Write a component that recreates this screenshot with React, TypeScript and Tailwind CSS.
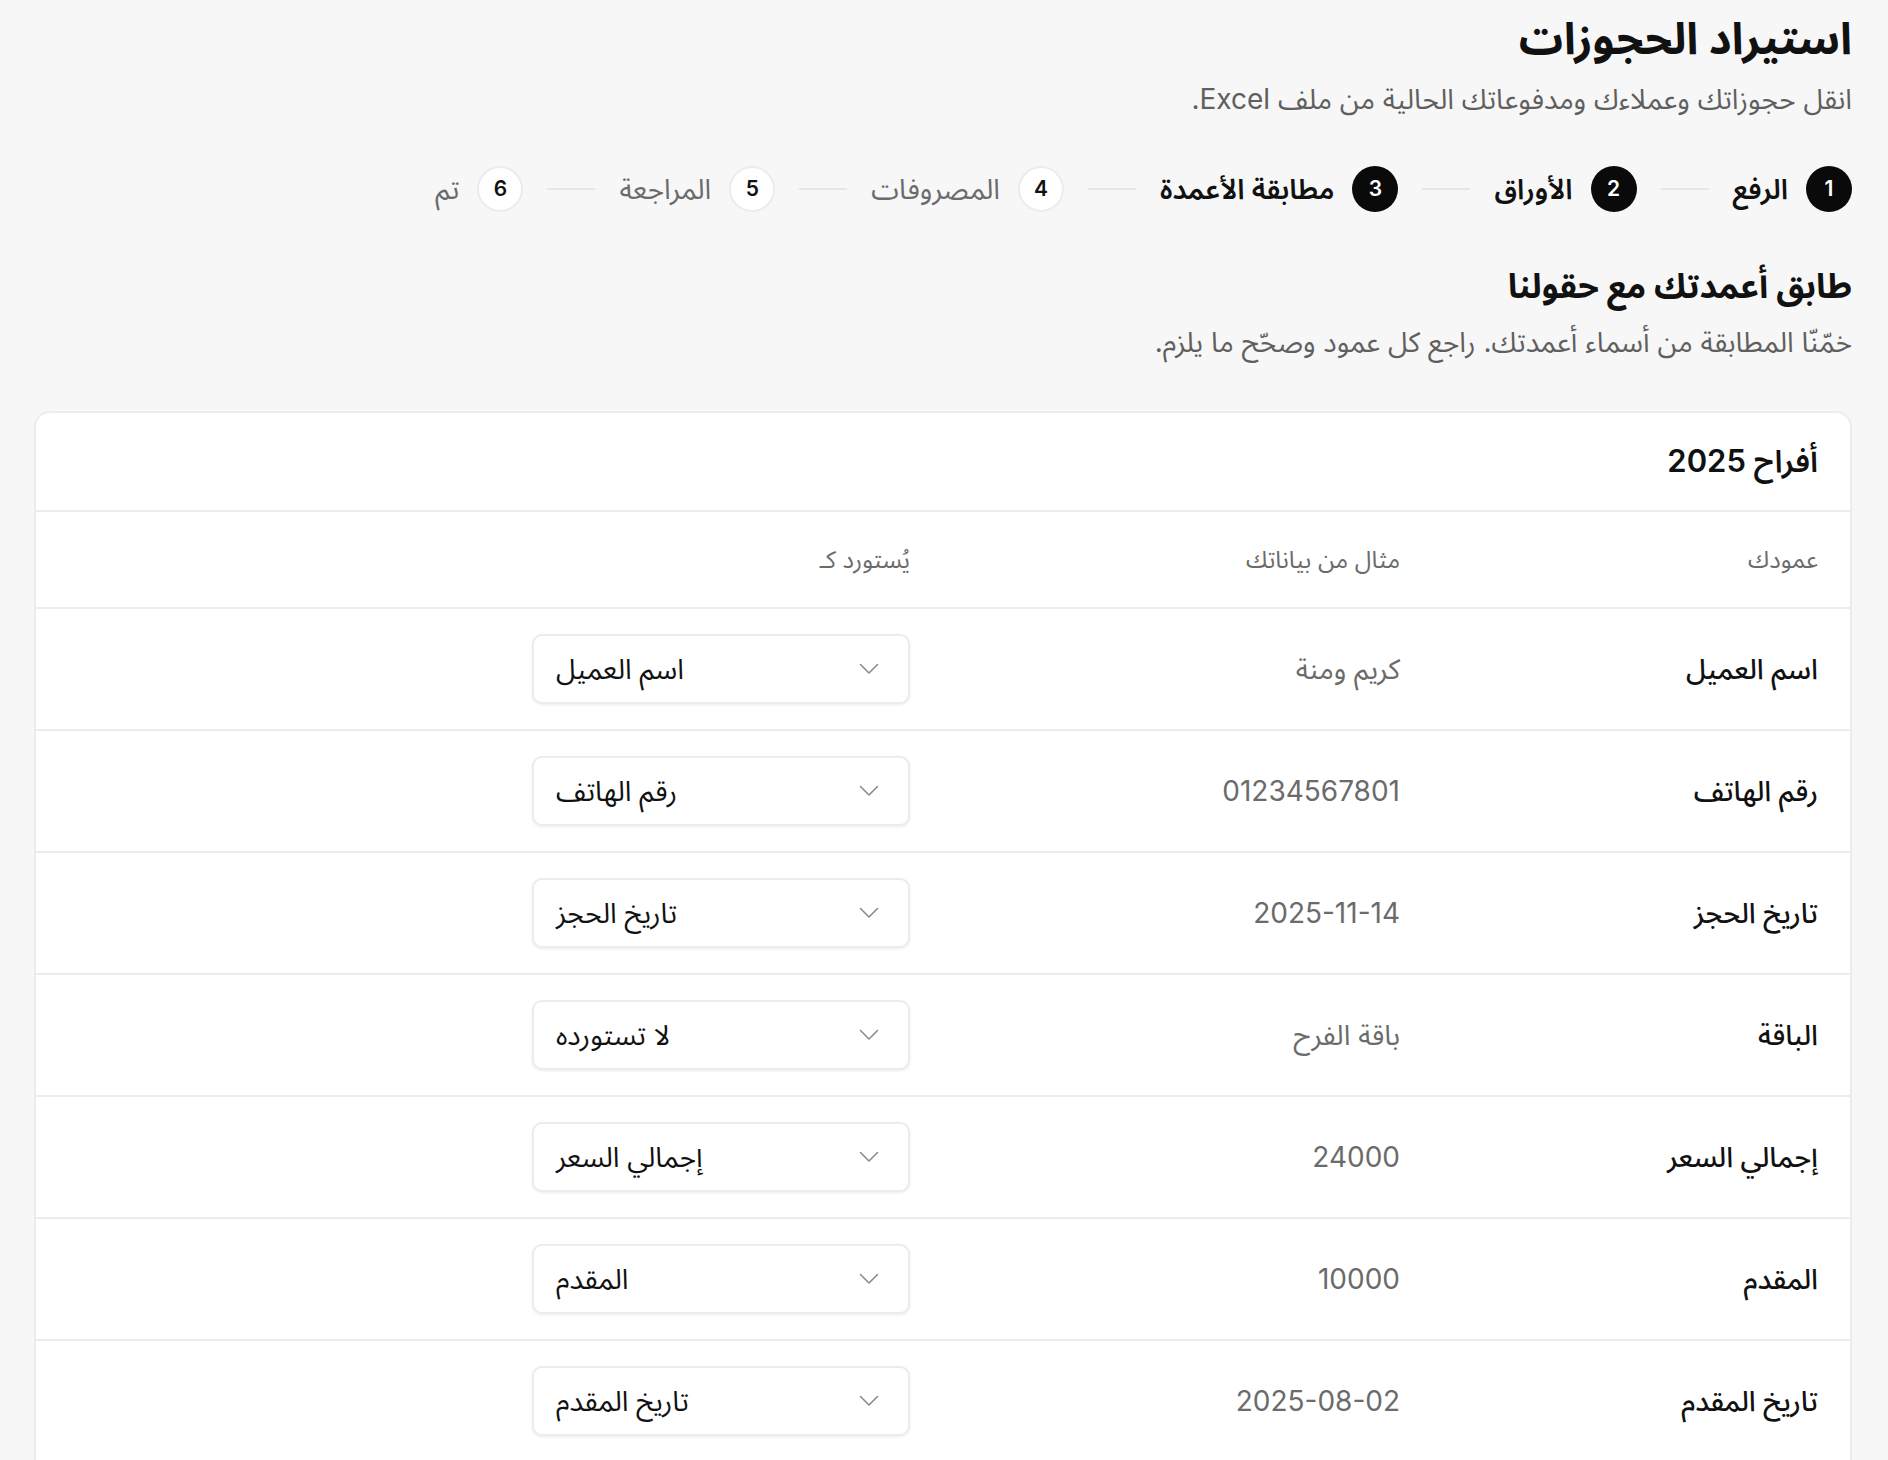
const font = { fontFamily: 'Inter, "Noto Sans Arabic", "DejaVu Sans", sans-serif' }

const steps = [
  { n: 1, label: "الرفع", done: true },
  { n: 2, label: "الأوراق", done: true },
  { n: 3, label: "مطابقة الأعمدة", done: true },
  { n: 4, label: "المصروفات", done: false },
  { n: 5, label: "المراجعة", done: false },
  { n: 6, label: "تم", done: false },
]

const rows = [
  { col: "اسم العميل", sample: "كريم ومنة", field: "اسم العميل" },
  { col: "رقم الهاتف", sample: "01234567801", field: "رقم الهاتف" },
  { col: "تاريخ الحجز", sample: "2025-11-14", field: "تاريخ الحجز" },
  { col: "الباقة", sample: "باقة الفرح", field: "لا تستورده" },
  { col: "إجمالي السعر", sample: "24000", field: "إجمالي السعر" },
  { col: "المقدم", sample: "10000", field: "المقدم" },
  { col: "تاريخ المقدم", sample: "2025-08-02", field: "تاريخ المقدم" },
]

function Stepper() {
  return (
    <div className="mt-[49px] flex items-center">
      {steps.map((s, i) => (
        <div key={s.n} className="flex items-center">
          <div className="flex items-center gap-[18px]">
            <div
              className={
                s.done
                  ? "flex h-[46px] w-[46px] items-center justify-center rounded-full bg-[#0a0a0a] text-[21px] font-semibold text-white"
                  : "flex h-[46px] w-[46px] items-center justify-center rounded-full border-2 border-[#ececec] bg-white text-[21px] font-semibold text-[#111]"
              }
            >
              {s.n}
            </div>
            <span
              className={
                s.done
                  ? "text-[28px] font-semibold leading-[40px] text-[#111]"
                  : "text-[28px] leading-[40px] text-[#6b6b6b]"
              }
            >
              {s.label}
            </span>
          </div>
          {i < steps.length - 1 && <div className="mx-6 h-[2px] w-12 bg-[#e6e6e6]" />}
        </div>
      ))}
    </div>
  )
}

function SelectBox({ value }: { value: string }) {
  return (
    <div
      dir="ltr"
      className="flex h-[70px] w-[378px] items-center justify-between rounded-[10px] border-2 border-[#ececec] bg-white pl-[22px] pr-[29px] shadow-[0_1px_3px_rgba(0,0,0,0.08)]"
    >
      <span dir="rtl" className="text-[28px] text-[#111]">
        {value}
      </span>
      <svg width="20" height="12" viewBox="0 0 20 12" fill="none" className="text-[#8c8c8c]">
        <path d="M1.5 1.5 L10 10 L18.5 1.5" stroke="currentColor" strokeWidth="1.6" strokeLinecap="round" strokeLinejoin="round" />
      </svg>
    </div>
  )
}

export default function App() {
  return (
    <div dir="rtl" style={font} className="min-h-screen bg-[#f7f7f7] pl-[34px] pr-9 pt-[13px] text-[#111]">
      <h1 className="text-[44px] font-bold leading-[50px]">استيراد الحجوزات</h1>
      <p className="mt-[18px] text-[28px] leading-[36px] text-[#5f5f5f]">
        انقل حجوزاتك وعملاءك ومدفوعاتك الحالية من ملف Excel.
      </p>

      <Stepper />

      <h2 className="mt-[52px] text-[34px] font-bold leading-[44px]">طابق أعمدتك مع حقولنا</h2>
      <p className="mt-[16px] text-[28px] leading-[36px] text-[#5f5f5f]">
        خمّنّا المطابقة من أسماء أعمدتك. راجع كل عمود وصحّح ما يلزم.
      </p>

      <div className="mt-[51px] rounded-t-2xl border-2 border-[#ececec] bg-white">
        <div className="flex h-[99px] items-center border-b-2 border-[#ececec] px-8">
          <span className="text-[31px] font-semibold">أفراح 2025</span>
        </div>
        <div className="grid h-[97px] grid-cols-[394px_466px_378px_1fr] items-center gap-x-6 border-b-2 border-[#ececec] px-8 text-[24px] text-[#6b6b6b]">
          <span>عمودك</span>
          <span>مثال من بياناتك</span>
          <span>يُستورد كـ</span>
          <span />
        </div>
        {rows.map((r) => (
          <div
            key={r.col}
            className="grid h-[122px] grid-cols-[394px_466px_378px_1fr] items-center gap-x-6 border-b-2 border-[#ececec] px-8"
          >
            <span className="text-[28px] font-medium">{r.col}</span>
            <span className="text-[28px] text-[#6b6b6b]">{r.sample}</span>
            <SelectBox value={r.field} />
            <span />
          </div>
        ))}
      </div>
    </div>
  )
}
